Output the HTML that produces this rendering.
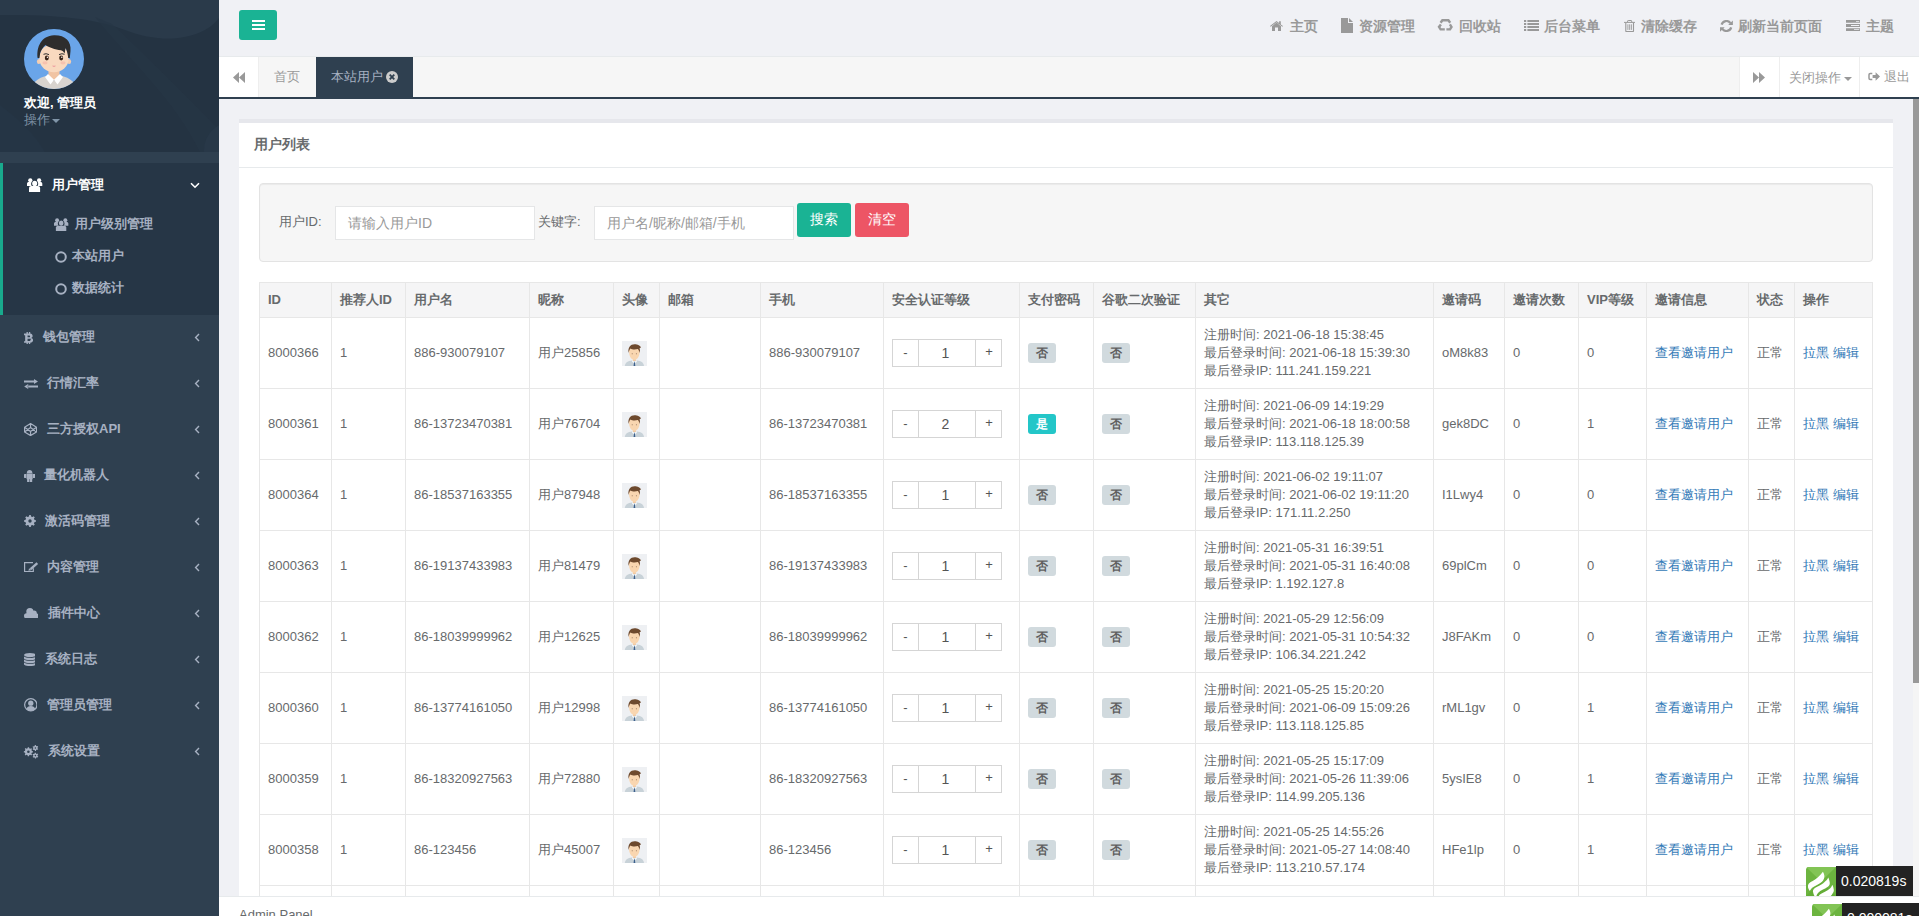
<!DOCTYPE html>
<html><head><meta charset="utf-8">
<style>
*{box-sizing:border-box}
html,body{margin:0;padding:0}
body{width:1919px;height:916px;overflow:hidden;position:relative;background:#f0f1f5;font-family:"Liberation Sans",sans-serif;font-size:13px;color:#676a6c}
.abs{position:absolute}
/* sidebar */
#side{position:absolute;left:0;top:0;width:219px;height:916px;background:#2f4050;overflow:hidden}
#prof{position:absolute;left:0;top:0;width:219px;height:152px;background:#243342;overflow:hidden}
#act{position:absolute;left:0;top:163px;width:219px;height:152px;background:#263646;border-left:3px solid #19aa8d}
.mi{position:absolute;left:0;width:219px;height:46px;color:#a7b1c2;font-weight:bold;font-size:13px}
.mi .ic{position:absolute;top:16px;left:24px}
.mi .tx{position:absolute;top:14px;line-height:18px}
.mi .ar{position:absolute;left:193px;top:17px}
/* top */
#top{position:absolute;left:219px;top:0;width:1700px;height:57px;background:#f0f1f5;border-bottom:1px solid #e7eaec}
#tabs{position:absolute;left:219px;top:57px;width:1700px;height:42px;background:#f6f6f6;border-bottom:2px solid #2f4050}
#main{position:absolute;left:219px;top:99px;width:1700px;height:797px;background:#f0f1f5;overflow:hidden}
#foot{position:absolute;left:219px;top:896px;width:1700px;height:20px;background:#fff;border-top:1px solid #e7eaec}
.nav-r{position:absolute;top:17px;font-size:14px;font-weight:bold;color:#999;line-height:18px;white-space:nowrap}
table.t{position:absolute;left:40px;top:183px;border-collapse:collapse;table-layout:fixed;font-size:13px;color:#676a6c}
table.t td,table.t th{border:1px solid #e7e7e7;padding:8px;line-height:18px;vertical-align:middle;text-align:left;white-space:nowrap;overflow:hidden}
table.t th{background:#f5f5f6;font-weight:bold}
a{color:#337ab7;text-decoration:none}
.lbl{display:inline-block;width:28px;height:20px;border-radius:3px;background:#d1dade;color:#5e5e5e;font-size:12px;font-weight:bold;text-align:center;line-height:20px}
.lbl.info{background:#23c6c8;color:#fff}
.stp{position:relative;width:110px;height:28px;border:1px solid #d5d5d5;color:#555}

.inp{background:#fff;border:1px solid #e5e6e7;color:#999;padding-left:12px;line-height:32px;font-size:14px;white-space:nowrap}
.btn{color:#fff;border-radius:3px;text-align:center;line-height:32px;font-size:14px;font-weight:500}
.stp .s1,.stp .s2,.stp .s3{position:absolute;top:0;height:26px;line-height:26px;text-align:center}
.stp .s1{left:0;width:26px;border-right:1px solid #d5d5d5}
.stp .s2{left:26px;width:56px;font-size:14px;padding-right:3px}
.stp .s3{left:82px;width:26px;border-left:1px solid #d5d5d5;line-height:24px;padding-left:1px}
</style></head>
<body>
<div id="side">
  <div id="prof">
    <svg class="abs" style="left:0;top:0" width="219" height="152" viewBox="0 0 219 152">
      <path d="M0 0H219V18C205 38 165 46 125 30C100 20 60 14 0 15Z" fill="#2a3a4a"/>
      <path d="M95 17 C 130 60, 175 100, 200 152 L 219 152 L 219 130 C 190 100, 150 60, 112 24Z" fill="#263646" opacity=".7"/>
      <circle cx="232" cy="150" r="28" fill="#283848"/>
      <path d="M0 105 C 20 120, 35 135, 45 152 L0 152Z" fill="#253545"/>
    </svg>
    <svg class="abs" style="left:24px;top:29px" width="60" height="60" viewBox="0 0 60 60">
      <circle cx="30" cy="30" r="30" fill="#6aa5e9"/>
      <path d="M24.5 40 h11 v7 L30 52 L24.5 47z" fill="#f1c4a3"/>
      <path d="M10.74 53 C 14 49.5, 19 47.5, 24 46.5 L30 52 L36 46.5 C 41 47.5, 46 49.5, 49.26 53 A30 30 0 0 1 10.74 53 Z" fill="#d9d4cf"/>
      <path d="M24 45 L30 50.8 L26.5 55.5 L21 48Z M36 45 L30 50.8 L33.5 55.5 L39 48Z" fill="#fff"/>
      <ellipse cx="14.8" cy="32.5" rx="1.9" ry="2.6" fill="#f4cdb0"/>
      <ellipse cx="45.2" cy="32.5" rx="1.9" ry="2.6" fill="#f4cdb0"/>
      <ellipse cx="30" cy="29.5" rx="14.7" ry="13.8" fill="#f9d9bf"/><path d="M16 30 C 15.5 22, 18 16, 30 15 C 42 16, 44.5 22, 44 30Z" fill="#f9d9bf"/>
      <path d="M13.6 29 C 12.5 18, 17 7, 30 6.3 C 41 6, 47.5 12, 46.5 22 L 45.8 29 L 44.2 29 C 43.8 24.5, 42.8 21.5, 41.6 19 L 40.6 24.5 C 39.5 22.5, 38.5 21.6, 37 21.2 C 31 20.5, 25 18.5, 21.5 16 C 19 18, 17.2 21, 16.2 24 L 15.4 29 Z" fill="#2e2d2d"/>
      <ellipse cx="22.8" cy="29" rx="2" ry="2.4" fill="#3a2418"/>
      <ellipse cx="37.2" cy="29" rx="2" ry="2.4" fill="#3a2418"/>
      <circle cx="23.4" cy="28.3" r=".7" fill="#fff"/><circle cx="37.8" cy="28.3" r=".7" fill="#fff"/>
      <path d="M19.5 25.3 Q22 24 25 25.6" stroke="#2e2d2d" stroke-width="1" fill="none"/>
      <path d="M35 25.6 Q38 24 40.5 25.3" stroke="#2e2d2d" stroke-width="1" fill="none"/>
      <ellipse cx="21" cy="33.8" rx="2.6" ry="1.6" fill="#f5b8a8" opacity=".7"/>
      <ellipse cx="39" cy="33.8" rx="2.6" ry="1.6" fill="#f5b8a8" opacity=".7"/>
      <path d="M28 36.8 Q30 38.8 32 36.8Z" fill="#e98a94"/>
    </svg>
    <div class="abs" style="left:24px;top:94px;font-size:13px;font-weight:bold;color:#fff;line-height:18px;white-space:nowrap">欢迎, 管理员</div>
    <div class="abs" style="left:24px;top:111px;font-size:13px;color:#8095a8;line-height:18px;white-space:nowrap">操作<span style="display:inline-block;margin-left:2px;vertical-align:middle;width:0;height:0;border-left:4px solid transparent;border-right:4px solid transparent;border-top:4px solid #8095a8"></span></div>
  </div>
  <div id="act"></div>
  <!-- 用户管理 -->
  <svg class="abs" style="left:27.4px;top:178px" width="16" height="14" viewBox="0 0 16 14" fill="#fff">
    <circle cx="3.3" cy="2.3" r="2.1"/><circle cx="12.1" cy="2.3" r="2.1"/>
    <path d="M0 8.1V5.8C0 4.8.8 4.1 1.8 4.1H4.6C4.2 4.7 4.1 5.3 4.1 6c0 .8.3 1.5.7 2.1z"/>
    <path d="M15.3 8.1V5.8c0-1-.8-1.7-1.8-1.7h-2.8c.4.6.5 1.2.5 1.9 0 .8-.3 1.5-.7 2.1z"/>
    <ellipse cx="7.67" cy="5.4" rx="2.5" ry="2.7"/>
    <path d="M2 14V10.2C2 9 3 8.1 4.2 8.1H11C12.2 8.1 13.1 9 13.1 10.2V14z"/>
  </svg>
  <div class="abs" style="left:52px;top:176px;color:#fff;font-weight:bold;line-height:18px">用户管理</div>
  <svg class="abs" style="left:190px;top:182px" width="10" height="7" viewBox="0 0 10 7"><path d="M1 1.2 L5 5.2 L9 1.2" stroke="#fff" stroke-width="1.6" fill="none"/></svg>
  <!-- sub -->
  <svg class="abs" style="left:54.4px;top:217.8px" width="15" height="13.2" viewBox="0 0 16 14" fill="#a7b1c2">
    <circle cx="3.3" cy="2.3" r="2.1"/><circle cx="12.1" cy="2.3" r="2.1"/>
    <path d="M0 8.1V5.8C0 4.8.8 4.1 1.8 4.1H4.6C4.2 4.7 4.1 5.3 4.1 6c0 .8.3 1.5.7 2.1z"/>
    <path d="M15.3 8.1V5.8c0-1-.8-1.7-1.8-1.7h-2.8c.4.6.5 1.2.5 1.9 0 .8-.3 1.5-.7 2.1z"/>
    <ellipse cx="7.67" cy="5.4" rx="2.5" ry="2.7"/>
    <path d="M2 14V10.2C2 9 3 8.1 4.2 8.1H11C12.2 8.1 13.1 9 13.1 10.2V14z"/>
  </svg>
  <div class="abs" style="left:75px;top:215px;color:#a7b1c2;font-weight:bold;line-height:18px">用户级别管理</div>
  <svg class="abs" style="left:55px;top:251px" width="12" height="12" viewBox="0 0 12 12"><circle cx="6" cy="6" r="4.8" stroke="#a7b1c2" stroke-width="2" fill="none"/></svg>
  <div class="abs" style="left:72px;top:247px;color:#a7b1c2;font-weight:bold;line-height:18px">本站用户</div>
  <svg class="abs" style="left:55px;top:283px" width="12" height="12" viewBox="0 0 12 12"><circle cx="6" cy="6" r="4.8" stroke="#a7b1c2" stroke-width="2" fill="none"/></svg>
  <div class="abs" style="left:72px;top:279px;color:#a7b1c2;font-weight:bold;line-height:18px">数据统计</div>
  <svg class="abs" style="left:23.9px;top:331.5px" width="9.6" height="12.4" viewBox="0 0 10 13" fill="#a7b1c2"><path d="M2.6 0h1.4v1.6h1.1V0h1.4v1.7C8 2 9 2.9 9 4.2c0 1-.6 1.7-1.4 2 1.2.3 1.9 1.1 1.9 2.3 0 1.7-1.3 2.7-3 2.9V13H5.1v-1.6H4V13H2.6v-1.6H0V9.6h1.2V3.4H0V1.6h2.6zM3.7 3.6v2h1.7c.6 0 1-.35 1-1S6 3.6 5.4 3.6zm0 3.6v2.2h1.9c.7 0 1.15-.4 1.15-1.1S8 7.2 7.3 7.2z"/></svg>
<div class="abs" style="left:43px;top:328px;color:#a7b1c2;font-weight:bold;line-height:18px;white-space:nowrap">钱包管理</div>
<svg class="abs" style="left:194px;top:333px" width="6" height="9" viewBox="0 0 6 9"><path d="M5 1 1.6 4.5 5 8" stroke="#a7b1c2" stroke-width="1.4" fill="none"/></svg>
<svg class="abs" style="left:23.7px;top:378.8px" width="14.2" height="10" viewBox="0 0 14.2 10" fill="#a7b1c2"><path d="M0 1.6H10.5V3.6H0z M10 0 14 2.6 10 5.1z M3.7 6.4H14.2V8.4H3.7z M4.2 4.9 0.2 7.4 4.2 10z"/></svg>
<div class="abs" style="left:47px;top:374px;color:#a7b1c2;font-weight:bold;line-height:18px;white-space:nowrap">行情汇率</div>
<svg class="abs" style="left:194px;top:379px" width="6" height="9" viewBox="0 0 6 9"><path d="M5 1 1.6 4.5 5 8" stroke="#a7b1c2" stroke-width="1.4" fill="none"/></svg>
<svg class="abs" style="left:23.9px;top:422.6px" width="13.1" height="13.2" viewBox="0 0 13.1 13.2" fill="none" stroke="#a7b1c2" stroke-width="1.2" stroke-linejoin="round"><path d="M6.55 0.6 12.5 4.3V8.9L6.55 12.6 0.6 8.9V4.3z M0.6 4.3 6.55 8.6 12.5 4.3 M0.6 8.9 6.55 4.6 12.5 8.9 M6.55 0.6V4.6 M6.55 8.6V12.6"/></svg>
<div class="abs" style="left:47px;top:420px;color:#a7b1c2;font-weight:bold;line-height:18px;white-space:nowrap">三方授权API</div>
<svg class="abs" style="left:194px;top:425px" width="6" height="9" viewBox="0 0 6 9"><path d="M5 1 1.6 4.5 5 8" stroke="#a7b1c2" stroke-width="1.4" fill="none"/></svg>
<svg class="abs" style="left:23.5px;top:469.9px" width="11.3" height="12" viewBox="0 0 11.3 12" fill="#a7b1c2"><path d="M2.8 3.2C2.8 1.4 4 0.1 5.6 0.1S8.4 1.4 8.4 3.2z"/><path d="M2.6 3.5H8.7V9.2H2.6z"/><path d="M0 4.6Q0 4 .6 4H2.4V7.9H.6Q0 7.9 0 7.3z"/><path d="M11.3 4.6Q11.3 4 10.7 4H8.9V7.9H10.7Q11.3 7.9 11.3 7.3z"/><path d="M3.1 9H5.4V12H3.1z M5.9 9H8.2V12H5.9z"/></svg>
<div class="abs" style="left:44px;top:466px;color:#a7b1c2;font-weight:bold;line-height:18px;white-space:nowrap">量化机器人</div>
<svg class="abs" style="left:194px;top:471px" width="6" height="9" viewBox="0 0 6 9"><path d="M5 1 1.6 4.5 5 8" stroke="#a7b1c2" stroke-width="1.4" fill="none"/></svg>
<svg class="abs" style="left:23.9px;top:515.4px" width="12" height="12" viewBox="0 0 12 12" fill="#a7b1c2" fill-rule="evenodd"><path d="M4.99 1.41 L5.18 0.06 L6.82 0.06 L7.01 1.41 L8.53 2.04 L9.62 1.22 L10.78 2.38 L9.96 3.47 L10.59 4.99 L11.94 5.18 L11.94 6.82 L10.59 7.01 L9.96 8.53 L10.78 9.62 L9.62 10.78 L8.53 9.96 L7.01 10.59 L6.82 11.94 L5.18 11.94 L4.99 10.59 L3.47 9.96 L2.38 10.78 L1.22 9.62 L2.04 8.53 L1.41 7.01 L0.06 6.82 L0.06 5.18 L1.41 4.99 L2.04 3.47 L1.22 2.38 L2.38 1.22 L3.47 2.04Z M7.70 6.00 A1.7 1.7 0 1 0 4.30 6.00 A1.7 1.7 0 1 0 7.70 6.00Z"/></svg>
<div class="abs" style="left:45px;top:512px;color:#a7b1c2;font-weight:bold;line-height:18px;white-space:nowrap">激活码管理</div>
<svg class="abs" style="left:194px;top:517px" width="6" height="9" viewBox="0 0 6 9"><path d="M5 1 1.6 4.5 5 8" stroke="#a7b1c2" stroke-width="1.4" fill="none"/></svg>
<svg class="abs" style="left:24px;top:561.8px" width="15" height="11" viewBox="0 0 15 11" fill="none" stroke="#a7b1c2"><path d="M9 0.6H0.6V9.5H9.3V6.2" stroke-width="1.2"/><path d="M13.3 1.2 6.6 7.2" stroke-width="2.4"/><path d="M4.6 8.6 5.3 6.5 7.2 8.1Z" fill="#a7b1c2" stroke-width=".3"/></svg>
<div class="abs" style="left:47px;top:558px;color:#a7b1c2;font-weight:bold;line-height:18px;white-space:nowrap">内容管理</div>
<svg class="abs" style="left:194px;top:563px" width="6" height="9" viewBox="0 0 6 9"><path d="M5 1 1.6 4.5 5 8" stroke="#a7b1c2" stroke-width="1.4" fill="none"/></svg>
<svg class="abs" style="left:23.9px;top:607.6px" width="14.5" height="10.6" viewBox="0 0 14.5 10.6" fill="#a7b1c2"><circle cx="2.6" cy="7.9" r="2.6"/><circle cx="5.9" cy="3.7" r="3.6"/><circle cx="10.1" cy="5.2" r="2.7"/><circle cx="11.9" cy="7.9" r="2.6"/><path d="M2.6 5.3H11.9V10.5H2.6z"/></svg>
<div class="abs" style="left:48px;top:604px;color:#a7b1c2;font-weight:bold;line-height:18px;white-space:nowrap">插件中心</div>
<svg class="abs" style="left:194px;top:609px" width="6" height="9" viewBox="0 0 6 9"><path d="M5 1 1.6 4.5 5 8" stroke="#a7b1c2" stroke-width="1.4" fill="none"/></svg>
<svg class="abs" style="left:23.7px;top:652.5px" width="11.8" height="13.4" viewBox="0 0 11.8 13.4" fill="#a7b1c2"><ellipse cx="5.9" cy="2.1" rx="5.9" ry="2.1"/><path d="M0 3.6C.8 4.5 3 5.0 5.9 5.0S11 4.5 11.8 3.6V5.6C11 6.6 8.8 7.2 5.9 7.2S.8 6.6 0 5.6Z M0 6.6C.8 7.5 3 8.0 5.9 8.0S11 7.5 11.8 6.6V8.6C11 9.6 8.8 10.2 5.9 10.2S.8 9.6 0 8.6Z M0 9.6C.8 10.5 3 11.0 5.9 11.0S11 10.5 11.8 9.6V11.5C11 12.5 8.8 13.1 5.9 13.1S.8 12.5 0 11.5Z"/></svg>
<div class="abs" style="left:45px;top:650px;color:#a7b1c2;font-weight:bold;line-height:18px;white-space:nowrap">系统日志</div>
<svg class="abs" style="left:194px;top:655px" width="6" height="9" viewBox="0 0 6 9"><path d="M5 1 1.6 4.5 5 8" stroke="#a7b1c2" stroke-width="1.4" fill="none"/></svg>
<svg class="abs" style="left:23.9px;top:698.4px" width="13.6" height="13.6" viewBox="0 0 13 13"><circle cx="6.5" cy="6.5" r="5.9" stroke="#a7b1c2" stroke-width="1.2" fill="none"/><circle cx="6.5" cy="5" r="2.5" fill="#a7b1c2"/><path d="M2.2 10.6C2.8 8.8 4.4 7.7 6.5 7.7s3.7 1.1 4.3 2.9C9.7 11.8 8.2 12.4 6.5 12.4S3.3 11.8 2.2 10.6z" fill="#a7b1c2"/></svg>
<div class="abs" style="left:47px;top:696px;color:#a7b1c2;font-weight:bold;line-height:18px;white-space:nowrap">管理员管理</div>
<svg class="abs" style="left:194px;top:701px" width="6" height="9" viewBox="0 0 6 9"><path d="M5 1 1.6 4.5 5 8" stroke="#a7b1c2" stroke-width="1.4" fill="none"/></svg>
<svg class="abs" style="left:23px;top:744.5px" width="16" height="14" viewBox="0 0 16 14" fill="#a7b1c2" fill-rule="evenodd"><path d="M4.64 3.28 L4.79 2.24 L6.05 2.25 L6.19 3.29 L7.35 3.78 L8.19 3.14 L9.08 4.04 L8.44 4.87 L8.92 6.04 L9.96 6.19 L9.95 7.45 L8.91 7.59 L8.42 8.75 L9.06 9.59 L8.16 10.48 L7.33 9.84 L6.16 10.32 L6.01 11.36 L4.75 11.35 L4.61 10.31 L3.45 9.82 L2.61 10.46 L1.72 9.56 L2.36 8.73 L1.88 7.56 L0.84 7.41 L0.85 6.15 L1.89 6.01 L2.38 4.85 L1.74 4.01 L2.64 3.12 L3.47 3.76Z M6.70 6.80 A1.3 1.3 0 1 0 4.10 6.80 A1.3 1.3 0 1 0 6.70 6.80Z M14.56 3.44 L15.26 3.90 L14.75 4.87 L13.97 4.54 L13.10 5.09 L13.05 5.93 L11.96 5.97 L11.85 5.13 L10.94 4.65 L10.19 5.03 L9.61 4.10 L10.28 3.59 L10.24 2.56 L9.54 2.10 L10.05 1.13 L10.83 1.46 L11.70 0.91 L11.75 0.07 L12.84 0.03 L12.95 0.87 L13.86 1.35 L14.61 0.97 L15.19 1.90 L14.52 2.41Z M13.20 3.00 A0.8 0.8 0 1 0 11.60 3.00 A0.8 0.8 0 1 0 13.20 3.00Z M14.56 11.04 L15.26 11.50 L14.75 12.47 L13.97 12.14 L13.10 12.69 L13.05 13.53 L11.96 13.57 L11.85 12.73 L10.94 12.25 L10.19 12.63 L9.61 11.70 L10.28 11.19 L10.24 10.16 L9.54 9.70 L10.05 8.73 L10.83 9.06 L11.70 8.51 L11.75 7.67 L12.84 7.63 L12.95 8.47 L13.86 8.95 L14.61 8.57 L15.19 9.50 L14.52 10.01Z M13.20 10.60 A0.8 0.8 0 1 0 11.60 10.60 A0.8 0.8 0 1 0 13.20 10.60Z"/></svg>
<div class="abs" style="left:48px;top:742px;color:#a7b1c2;font-weight:bold;line-height:18px;white-space:nowrap">系统设置</div>
<svg class="abs" style="left:194px;top:747px" width="6" height="9" viewBox="0 0 6 9"><path d="M5 1 1.6 4.5 5 8" stroke="#a7b1c2" stroke-width="1.4" fill="none"/></svg>

</div>
<div id="top">
  <div class="abs" style="left:20px;top:10px;width:38px;height:30px;background:#1ab394;border-radius:3px">
    <div class="abs" style="left:13px;top:10px;width:13px;height:2px;background:#fff"></div>
    <div class="abs" style="left:13px;top:14px;width:13px;height:2px;background:#fff"></div>
    <div class="abs" style="left:13px;top:18px;width:13px;height:2px;background:#fff"></div>
  </div>
</div>
<!-- top right menu -->
<svg class="abs" style="left:1270px;top:21px" width="13" height="10" viewBox="0 0 13 10" fill="#999"><path d="M6.5 1.6 11 5.3V10H8V6.6H5V10H2V5.3z"/><path d="M0 5.1 6.5 0l2.6 2V.3h1.7v3.2L13 5.1l-.7.7-5.8-4.5L.7 5.8z"/></svg>
<div class="nav-r" style="left:1290px">主页</div>
<svg class="abs" style="left:1341px;top:18px" width="12" height="15" viewBox="0 0 12 15" fill="#999"><path d="M0 0h7v5h5v10H0z M8 0l4 4H8z"/></svg>
<div class="nav-r" style="left:1359px">资源管理</div>
<svg class="abs" style="left:1436px;top:17px" width="18" height="16" viewBox="0 0 18 16" fill="none" stroke="#999" stroke-width="2.4" stroke-linejoin="miter"><path d="M4.6 5.8 6.4 3.2H12.4L14.2 5.8"/><path d="M13.9 7.4 15.5 9.9 14 12.4H10.4"/><path d="M4.9 7.4 3 9.9 4.6 12.4H8.8"/></svg>
<div class="nav-r" style="left:1459px">回收站</div>
<svg class="abs" style="left:1523.8px;top:19.9px" width="15.2" height="11" viewBox="0 0 15.2 11" fill="#999"><path d="M0 0.00h2.2v1.9H0z M3.4 0.00h11.8v1.9H3.4z M0 3.03h2.2v1.9H0z M3.4 3.03h11.8v1.9H3.4z M0 6.06h2.2v1.9H0z M3.4 6.06h11.8v1.9H3.4z M0 9.09h2.2v1.9H0z M3.4 9.09h11.8v1.9H3.4z "/></svg>
<div class="nav-r" style="left:1544px">后台菜单</div>
<svg class="abs" style="left:1623.5px;top:20px" width="11.3" height="12" viewBox="0 0 11.3 12" fill="none" stroke="#999"><path d="M3.6 2.2V1.1Q3.6 .5 4.2 .5H7.1Q7.7 .5 7.7 1.1V2.2" stroke-width="1"/><path d="M0 2.4H11.3" stroke-width="1"/><path d="M1.8 2.8V11Q1.8 11.5 2.3 11.5H9Q9.5 11.5 9.5 11V2.8" stroke-width="1.1"/><path d="M3.9 4.3V9.9 M5.65 4.3V9.9 M7.4 4.3V9.9" stroke-width=".9"/></svg>
<div class="nav-r" style="left:1641px">清除缓存</div>
<svg class="abs" style="left:1720px;top:20px" width="13" height="12" viewBox="0 0 13 12" fill="#999"><path d="M1.6 4.6A4.9 4.9 0 0 1 10.4 3.2" stroke="#999" stroke-width="2.2" fill="none"/><path d="M12.9 0.4V4.9H8.2z"/><path d="M11.2 7.4A4.9 4.9 0 0 1 2.4 8.8" stroke="#999" stroke-width="2.2" fill="none"/><path d="M0 11.8V7.2H4.7z"/></svg>
<div class="nav-r" style="left:1738px">刷新当前页面</div>
<svg class="abs" style="left:1846px;top:20px" width="14" height="11" viewBox="0 0 14 11"><path d="M0 0h14v2.8H0z M0 4.1h14v2.8H0z M0 8.2h14v2.8H0z" fill="#999"/><path d="M10 1h3.2v.8H10z M5 5.1h8.2v.8H5z M8 9.2h5.2v.8H8z" fill="#f0f1f5"/></svg>
<div class="nav-r" style="left:1866px">主题</div>
<div id="tabs">
  <div class="abs" style="left:0;top:0;width:40px;height:40px;background:#fff;border-right:1px solid #eee"></div>
  <svg class="abs" style="left:14px;top:15px" width="12" height="11" viewBox="0 0 12 11" fill="#999"><path d="M0 5.5 6 0v11z M6 5.5l6-5.5v11z"/></svg>
  <div class="abs" style="left:40px;top:0;width:57px;height:40px;line-height:39px;color:#999;padding-left:15px">首页</div>
  <div class="abs" style="left:97px;top:0;width:97px;height:40px;background:#2f4050;color:#a7b1c2;line-height:40px;padding-left:15px;white-space:nowrap">本站用户</div>
  <svg class="abs" style="left:167px;top:14px" width="12" height="12" viewBox="0 0 12 12"><circle cx="6" cy="6" r="6" fill="#ccc"/><path d="M3.7 3.7 8.3 8.3 M8.3 3.7 3.7 8.3" stroke="#2f4050" stroke-width="1.8"/></svg>
  <div class="abs" style="left:1521px;top:0;width:179px;height:40px;background:#fff"></div>
  <div class="abs" style="left:1520px;top:0;width:1px;height:40px;background:#eee"></div>
  <div class="abs" style="left:1560px;top:0;width:1px;height:40px;background:#eee"></div>
  <div class="abs" style="left:1640px;top:0;width:1px;height:40px;background:#eee"></div>
  <svg class="abs" style="left:1534px;top:15px" width="12" height="11" viewBox="0 0 12 11" fill="#999"><path d="M12 5.5 6 0v11z M6 5.5 0 0v11z"/></svg>
  <div class="abs" style="left:1569.5px;top:0.5px;line-height:40px;color:#999;white-space:nowrap">关闭操作<span style="display:inline-block;margin-left:3px;vertical-align:middle;position:relative;top:1px;width:0;height:0;border-left:4px solid transparent;border-right:4px solid transparent;border-top:4px solid #999"></span></div>
  <svg class="abs" style="left:1649.3px;top:14.9px" width="12" height="9" viewBox="0 0 12 9"><path d="M4.3 1.6H2.2Q1 1.6 1 2.8V6.2Q1 7.4 2.2 7.4H4.3" stroke="#999" stroke-width="1.5" fill="none"/><path d="M4.6 3.1H7.6V0.2L12 4.5 7.6 8.8V5.9H4.6Z" fill="#999"/></svg>
  <div class="abs" style="left:1665px;top:0;line-height:40px;color:#999;white-space:nowrap">退出</div>
</div>
<div id="main">
  <div class="abs" style="left:20px;top:20px;width:1654px;height:800px;background:#fff;border-top:4px solid #e6e7ec">
    <div class="abs" style="left:15px;top:12px;font-size:14px;font-weight:bold;line-height:18px;color:#676a6c">用户列表</div>
    <div class="abs" style="left:0;top:44px;width:1654px;height:1px;background:#e7eaec"></div>
    <div class="abs well" style="left:20px;top:60px;width:1614px;height:79px;background:#f6f6f6;border:1px solid #e3e3e3;border-radius:4px;box-shadow:inset 0 1px 1px rgba(0,0,0,.05)">
      <div class="abs" style="left:19px;top:29px;line-height:18px;color:#676a6c">用户ID:</div>
      <div class="abs inp" style="left:75px;top:22px;width:200px;height:34px">请输入用户ID</div>
      <div class="abs" style="left:278px;top:29px;line-height:18px;color:#676a6c">关键字:</div>
      <div class="abs inp" style="left:334px;top:22px;width:200px;height:34px">用户名/昵称/邮箱/手机</div>
      <div class="abs btn" style="left:537px;top:19px;width:54px;height:34px;background:#1ab394">搜索</div>
      <div class="abs btn" style="left:595px;top:19px;width:54px;height:34px;background:#ed5565">清空</div>
    </div>
  </div>
  <table class="t"><colgroup><col style="width:72px"><col style="width:74px"><col style="width:124px"><col style="width:84px"><col style="width:46px"><col style="width:101px"><col style="width:123px"><col style="width:136px"><col style="width:74px"><col style="width:102px"><col style="width:238px"><col style="width:71px"><col style="width:74px"><col style="width:68px"><col style="width:102px"><col style="width:46px"><col style="width:78px"></colgroup><thead><tr><th>ID</th><th>推荐人ID</th><th>用户名</th><th>昵称</th><th>头像</th><th>邮箱</th><th>手机</th><th>安全认证等级</th><th>支付密码</th><th>谷歌二次验证</th><th>其它</th><th>邀请码</th><th>邀请次数</th><th>VIP等级</th><th>邀请信息</th><th>状态</th><th>操作</th></tr></thead><tbody>
<tr><td>8000366</td><td>1</td><td>886-930079107</td><td>用户25856</td><td><svg width="25" height="25" viewBox="0 0 25 25" style="display:block"><rect width="25" height="25" fill="#eef0f3"/><path d="M2.8 25C3.2 21.5 6 20.2 10 19.6H15C19 20.2 21.6 21.5 22 25Z" fill="#c8d2d8"/><path d="M11 16h2.8v4H11z" fill="#f3c9a0"/><path d="M10 19.3 12.4 21 14.8 19.3 14.6 20.9 12.4 22.2 10.3 20.9Z" fill="#fff"/><path d="M12 21.2H12.9L13.3 25H11.6Z" fill="#3b5f8c"/><path d="M7 9.5C7 7 9.5 6 12.3 6 15 6 17.6 7 17.7 9.5 17.9 15.5 15.2 18.8 12.3 18.8 9.5 18.8 6.8 15.5 7 9.5Z" fill="#f9d6b0"/><path d="M6.5 12C5.8 6.5 8.5 3.2 12.5 3.2 15.5 3.2 18.8 4.5 18.8 6.5 18.5 7 18 7.2 17.6 7 18 8.5 18 10 17.8 12 17.2 10 16.5 8.6 15.8 8 13 8.8 10 8.5 8.5 7.5 7.5 8.5 7 10 6.5 12Z" fill="#6e4a2e"/><circle cx="10.2" cy="12.8" r=".5" fill="#8a6a55"/><circle cx="14.4" cy="12.8" r=".5" fill="#8a6a55"/></svg></td><td></td><td>886-930079107</td>
<td><div class="stp"><div class="s1">-</div><div class="s2">1</div><div class="s3">+</div></div></td>
<td><span class="lbl">否</span></td><td><span class="lbl">否</span></td>
<td>注册时间: 2021-06-18 15:38:45<br>最后登录时间: 2021-06-18 15:39:30<br>最后登录IP: 111.241.159.221</td>
<td>oM8k83</td><td>0</td><td>0</td><td><a>查看邀请用户</a></td><td>正常</td><td><a>拉黑</a> <a>编辑</a></td></tr>
<tr><td>8000361</td><td>1</td><td>86-13723470381</td><td>用户76704</td><td><svg width="25" height="25" viewBox="0 0 25 25" style="display:block"><rect width="25" height="25" fill="#eef0f3"/><path d="M2.8 25C3.2 21.5 6 20.2 10 19.6H15C19 20.2 21.6 21.5 22 25Z" fill="#c8d2d8"/><path d="M11 16h2.8v4H11z" fill="#f3c9a0"/><path d="M10 19.3 12.4 21 14.8 19.3 14.6 20.9 12.4 22.2 10.3 20.9Z" fill="#fff"/><path d="M12 21.2H12.9L13.3 25H11.6Z" fill="#3b5f8c"/><path d="M7 9.5C7 7 9.5 6 12.3 6 15 6 17.6 7 17.7 9.5 17.9 15.5 15.2 18.8 12.3 18.8 9.5 18.8 6.8 15.5 7 9.5Z" fill="#f9d6b0"/><path d="M6.5 12C5.8 6.5 8.5 3.2 12.5 3.2 15.5 3.2 18.8 4.5 18.8 6.5 18.5 7 18 7.2 17.6 7 18 8.5 18 10 17.8 12 17.2 10 16.5 8.6 15.8 8 13 8.8 10 8.5 8.5 7.5 7.5 8.5 7 10 6.5 12Z" fill="#6e4a2e"/><circle cx="10.2" cy="12.8" r=".5" fill="#8a6a55"/><circle cx="14.4" cy="12.8" r=".5" fill="#8a6a55"/></svg></td><td></td><td>86-13723470381</td>
<td><div class="stp"><div class="s1">-</div><div class="s2">2</div><div class="s3">+</div></div></td>
<td><span class="lbl info">是</span></td><td><span class="lbl">否</span></td>
<td>注册时间: 2021-06-09 14:19:29<br>最后登录时间: 2021-06-18 18:00:58<br>最后登录IP: 113.118.125.39</td>
<td>gek8DC</td><td>0</td><td>1</td><td><a>查看邀请用户</a></td><td>正常</td><td><a>拉黑</a> <a>编辑</a></td></tr>
<tr><td>8000364</td><td>1</td><td>86-18537163355</td><td>用户87948</td><td><svg width="25" height="25" viewBox="0 0 25 25" style="display:block"><rect width="25" height="25" fill="#eef0f3"/><path d="M2.8 25C3.2 21.5 6 20.2 10 19.6H15C19 20.2 21.6 21.5 22 25Z" fill="#c8d2d8"/><path d="M11 16h2.8v4H11z" fill="#f3c9a0"/><path d="M10 19.3 12.4 21 14.8 19.3 14.6 20.9 12.4 22.2 10.3 20.9Z" fill="#fff"/><path d="M12 21.2H12.9L13.3 25H11.6Z" fill="#3b5f8c"/><path d="M7 9.5C7 7 9.5 6 12.3 6 15 6 17.6 7 17.7 9.5 17.9 15.5 15.2 18.8 12.3 18.8 9.5 18.8 6.8 15.5 7 9.5Z" fill="#f9d6b0"/><path d="M6.5 12C5.8 6.5 8.5 3.2 12.5 3.2 15.5 3.2 18.8 4.5 18.8 6.5 18.5 7 18 7.2 17.6 7 18 8.5 18 10 17.8 12 17.2 10 16.5 8.6 15.8 8 13 8.8 10 8.5 8.5 7.5 7.5 8.5 7 10 6.5 12Z" fill="#6e4a2e"/><circle cx="10.2" cy="12.8" r=".5" fill="#8a6a55"/><circle cx="14.4" cy="12.8" r=".5" fill="#8a6a55"/></svg></td><td></td><td>86-18537163355</td>
<td><div class="stp"><div class="s1">-</div><div class="s2">1</div><div class="s3">+</div></div></td>
<td><span class="lbl">否</span></td><td><span class="lbl">否</span></td>
<td>注册时间: 2021-06-02 19:11:07<br>最后登录时间: 2021-06-02 19:11:20<br>最后登录IP: 171.11.2.250</td>
<td>I1Lwy4</td><td>0</td><td>0</td><td><a>查看邀请用户</a></td><td>正常</td><td><a>拉黑</a> <a>编辑</a></td></tr>
<tr><td>8000363</td><td>1</td><td>86-19137433983</td><td>用户81479</td><td><svg width="25" height="25" viewBox="0 0 25 25" style="display:block"><rect width="25" height="25" fill="#eef0f3"/><path d="M2.8 25C3.2 21.5 6 20.2 10 19.6H15C19 20.2 21.6 21.5 22 25Z" fill="#c8d2d8"/><path d="M11 16h2.8v4H11z" fill="#f3c9a0"/><path d="M10 19.3 12.4 21 14.8 19.3 14.6 20.9 12.4 22.2 10.3 20.9Z" fill="#fff"/><path d="M12 21.2H12.9L13.3 25H11.6Z" fill="#3b5f8c"/><path d="M7 9.5C7 7 9.5 6 12.3 6 15 6 17.6 7 17.7 9.5 17.9 15.5 15.2 18.8 12.3 18.8 9.5 18.8 6.8 15.5 7 9.5Z" fill="#f9d6b0"/><path d="M6.5 12C5.8 6.5 8.5 3.2 12.5 3.2 15.5 3.2 18.8 4.5 18.8 6.5 18.5 7 18 7.2 17.6 7 18 8.5 18 10 17.8 12 17.2 10 16.5 8.6 15.8 8 13 8.8 10 8.5 8.5 7.5 7.5 8.5 7 10 6.5 12Z" fill="#6e4a2e"/><circle cx="10.2" cy="12.8" r=".5" fill="#8a6a55"/><circle cx="14.4" cy="12.8" r=".5" fill="#8a6a55"/></svg></td><td></td><td>86-19137433983</td>
<td><div class="stp"><div class="s1">-</div><div class="s2">1</div><div class="s3">+</div></div></td>
<td><span class="lbl">否</span></td><td><span class="lbl">否</span></td>
<td>注册时间: 2021-05-31 16:39:51<br>最后登录时间: 2021-05-31 16:40:08<br>最后登录IP: 1.192.127.8</td>
<td>69plCm</td><td>0</td><td>0</td><td><a>查看邀请用户</a></td><td>正常</td><td><a>拉黑</a> <a>编辑</a></td></tr>
<tr><td>8000362</td><td>1</td><td>86-18039999962</td><td>用户12625</td><td><svg width="25" height="25" viewBox="0 0 25 25" style="display:block"><rect width="25" height="25" fill="#eef0f3"/><path d="M2.8 25C3.2 21.5 6 20.2 10 19.6H15C19 20.2 21.6 21.5 22 25Z" fill="#c8d2d8"/><path d="M11 16h2.8v4H11z" fill="#f3c9a0"/><path d="M10 19.3 12.4 21 14.8 19.3 14.6 20.9 12.4 22.2 10.3 20.9Z" fill="#fff"/><path d="M12 21.2H12.9L13.3 25H11.6Z" fill="#3b5f8c"/><path d="M7 9.5C7 7 9.5 6 12.3 6 15 6 17.6 7 17.7 9.5 17.9 15.5 15.2 18.8 12.3 18.8 9.5 18.8 6.8 15.5 7 9.5Z" fill="#f9d6b0"/><path d="M6.5 12C5.8 6.5 8.5 3.2 12.5 3.2 15.5 3.2 18.8 4.5 18.8 6.5 18.5 7 18 7.2 17.6 7 18 8.5 18 10 17.8 12 17.2 10 16.5 8.6 15.8 8 13 8.8 10 8.5 8.5 7.5 7.5 8.5 7 10 6.5 12Z" fill="#6e4a2e"/><circle cx="10.2" cy="12.8" r=".5" fill="#8a6a55"/><circle cx="14.4" cy="12.8" r=".5" fill="#8a6a55"/></svg></td><td></td><td>86-18039999962</td>
<td><div class="stp"><div class="s1">-</div><div class="s2">1</div><div class="s3">+</div></div></td>
<td><span class="lbl">否</span></td><td><span class="lbl">否</span></td>
<td>注册时间: 2021-05-29 12:56:09<br>最后登录时间: 2021-05-31 10:54:32<br>最后登录IP: 106.34.221.242</td>
<td>J8FAKm</td><td>0</td><td>0</td><td><a>查看邀请用户</a></td><td>正常</td><td><a>拉黑</a> <a>编辑</a></td></tr>
<tr><td>8000360</td><td>1</td><td>86-13774161050</td><td>用户12998</td><td><svg width="25" height="25" viewBox="0 0 25 25" style="display:block"><rect width="25" height="25" fill="#eef0f3"/><path d="M2.8 25C3.2 21.5 6 20.2 10 19.6H15C19 20.2 21.6 21.5 22 25Z" fill="#c8d2d8"/><path d="M11 16h2.8v4H11z" fill="#f3c9a0"/><path d="M10 19.3 12.4 21 14.8 19.3 14.6 20.9 12.4 22.2 10.3 20.9Z" fill="#fff"/><path d="M12 21.2H12.9L13.3 25H11.6Z" fill="#3b5f8c"/><path d="M7 9.5C7 7 9.5 6 12.3 6 15 6 17.6 7 17.7 9.5 17.9 15.5 15.2 18.8 12.3 18.8 9.5 18.8 6.8 15.5 7 9.5Z" fill="#f9d6b0"/><path d="M6.5 12C5.8 6.5 8.5 3.2 12.5 3.2 15.5 3.2 18.8 4.5 18.8 6.5 18.5 7 18 7.2 17.6 7 18 8.5 18 10 17.8 12 17.2 10 16.5 8.6 15.8 8 13 8.8 10 8.5 8.5 7.5 7.5 8.5 7 10 6.5 12Z" fill="#6e4a2e"/><circle cx="10.2" cy="12.8" r=".5" fill="#8a6a55"/><circle cx="14.4" cy="12.8" r=".5" fill="#8a6a55"/></svg></td><td></td><td>86-13774161050</td>
<td><div class="stp"><div class="s1">-</div><div class="s2">1</div><div class="s3">+</div></div></td>
<td><span class="lbl">否</span></td><td><span class="lbl">否</span></td>
<td>注册时间: 2021-05-25 15:20:20<br>最后登录时间: 2021-06-09 15:09:26<br>最后登录IP: 113.118.125.85</td>
<td>rML1gv</td><td>0</td><td>1</td><td><a>查看邀请用户</a></td><td>正常</td><td><a>拉黑</a> <a>编辑</a></td></tr>
<tr><td>8000359</td><td>1</td><td>86-18320927563</td><td>用户72880</td><td><svg width="25" height="25" viewBox="0 0 25 25" style="display:block"><rect width="25" height="25" fill="#eef0f3"/><path d="M2.8 25C3.2 21.5 6 20.2 10 19.6H15C19 20.2 21.6 21.5 22 25Z" fill="#c8d2d8"/><path d="M11 16h2.8v4H11z" fill="#f3c9a0"/><path d="M10 19.3 12.4 21 14.8 19.3 14.6 20.9 12.4 22.2 10.3 20.9Z" fill="#fff"/><path d="M12 21.2H12.9L13.3 25H11.6Z" fill="#3b5f8c"/><path d="M7 9.5C7 7 9.5 6 12.3 6 15 6 17.6 7 17.7 9.5 17.9 15.5 15.2 18.8 12.3 18.8 9.5 18.8 6.8 15.5 7 9.5Z" fill="#f9d6b0"/><path d="M6.5 12C5.8 6.5 8.5 3.2 12.5 3.2 15.5 3.2 18.8 4.5 18.8 6.5 18.5 7 18 7.2 17.6 7 18 8.5 18 10 17.8 12 17.2 10 16.5 8.6 15.8 8 13 8.8 10 8.5 8.5 7.5 7.5 8.5 7 10 6.5 12Z" fill="#6e4a2e"/><circle cx="10.2" cy="12.8" r=".5" fill="#8a6a55"/><circle cx="14.4" cy="12.8" r=".5" fill="#8a6a55"/></svg></td><td></td><td>86-18320927563</td>
<td><div class="stp"><div class="s1">-</div><div class="s2">1</div><div class="s3">+</div></div></td>
<td><span class="lbl">否</span></td><td><span class="lbl">否</span></td>
<td>注册时间: 2021-05-25 15:17:09<br>最后登录时间: 2021-05-26 11:39:06<br>最后登录IP: 114.99.205.136</td>
<td>5ysIE8</td><td>0</td><td>1</td><td><a>查看邀请用户</a></td><td>正常</td><td><a>拉黑</a> <a>编辑</a></td></tr>
<tr><td>8000358</td><td>1</td><td>86-123456</td><td>用户45007</td><td><svg width="25" height="25" viewBox="0 0 25 25" style="display:block"><rect width="25" height="25" fill="#eef0f3"/><path d="M2.8 25C3.2 21.5 6 20.2 10 19.6H15C19 20.2 21.6 21.5 22 25Z" fill="#c8d2d8"/><path d="M11 16h2.8v4H11z" fill="#f3c9a0"/><path d="M10 19.3 12.4 21 14.8 19.3 14.6 20.9 12.4 22.2 10.3 20.9Z" fill="#fff"/><path d="M12 21.2H12.9L13.3 25H11.6Z" fill="#3b5f8c"/><path d="M7 9.5C7 7 9.5 6 12.3 6 15 6 17.6 7 17.7 9.5 17.9 15.5 15.2 18.8 12.3 18.8 9.5 18.8 6.8 15.5 7 9.5Z" fill="#f9d6b0"/><path d="M6.5 12C5.8 6.5 8.5 3.2 12.5 3.2 15.5 3.2 18.8 4.5 18.8 6.5 18.5 7 18 7.2 17.6 7 18 8.5 18 10 17.8 12 17.2 10 16.5 8.6 15.8 8 13 8.8 10 8.5 8.5 7.5 7.5 8.5 7 10 6.5 12Z" fill="#6e4a2e"/><circle cx="10.2" cy="12.8" r=".5" fill="#8a6a55"/><circle cx="14.4" cy="12.8" r=".5" fill="#8a6a55"/></svg></td><td></td><td>86-123456</td>
<td><div class="stp"><div class="s1">-</div><div class="s2">1</div><div class="s3">+</div></div></td>
<td><span class="lbl">否</span></td><td><span class="lbl">否</span></td>
<td>注册时间: 2021-05-25 14:55:26<br>最后登录时间: 2021-05-27 14:08:40<br>最后登录IP: 113.210.57.174</td>
<td>HFe1lp</td><td>0</td><td>1</td><td><a>查看邀请用户</a></td><td>正常</td><td><a>拉黑</a> <a>编辑</a></td></tr>
<tr><td>8000357</td><td>1</td><td>86-123456</td><td>用户45007</td><td><svg width="25" height="25" viewBox="0 0 25 25" style="display:block"><rect width="25" height="25" fill="#eef0f3"/><path d="M2.8 25C3.2 21.5 6 20.2 10 19.6H15C19 20.2 21.6 21.5 22 25Z" fill="#c8d2d8"/><path d="M11 16h2.8v4H11z" fill="#f3c9a0"/><path d="M10 19.3 12.4 21 14.8 19.3 14.6 20.9 12.4 22.2 10.3 20.9Z" fill="#fff"/><path d="M12 21.2H12.9L13.3 25H11.6Z" fill="#3b5f8c"/><path d="M7 9.5C7 7 9.5 6 12.3 6 15 6 17.6 7 17.7 9.5 17.9 15.5 15.2 18.8 12.3 18.8 9.5 18.8 6.8 15.5 7 9.5Z" fill="#f9d6b0"/><path d="M6.5 12C5.8 6.5 8.5 3.2 12.5 3.2 15.5 3.2 18.8 4.5 18.8 6.5 18.5 7 18 7.2 17.6 7 18 8.5 18 10 17.8 12 17.2 10 16.5 8.6 15.8 8 13 8.8 10 8.5 8.5 7.5 7.5 8.5 7 10 6.5 12Z" fill="#6e4a2e"/><circle cx="10.2" cy="12.8" r=".5" fill="#8a6a55"/><circle cx="14.4" cy="12.8" r=".5" fill="#8a6a55"/></svg></td><td></td><td>86-123456</td>
<td><div class="stp"><div class="s1">-</div><div class="s2">1</div><div class="s3">+</div></div></td>
<td><span class="lbl">否</span></td><td><span class="lbl">否</span></td>
<td>注册时间: 2021-05-25 14:55:26<br>最后登录时间: 2021-05-27 14:08:40<br>最后登录IP: 113.210.57.174</td>
<td>HFe1lp</td><td>0</td><td>1</td><td><a>查看邀请用户</a></td><td>正常</td><td><a>拉黑</a> <a>编辑</a></td></tr>
</tbody></table>
  <div class="abs" style="left:1694px;top:0;width:6px;height:797px;background:#f5f5f5"></div><div class="abs" style="left:1694px;top:0;width:6px;height:584px;background:#999"></div>
</div>
<div id="foot"><div class="abs" style="left:20px;top:9px;line-height:18px;color:#676a6c;font-size:13px">Admin Panel</div></div>
<div class="abs" style="left:1806px;top:867px;width:30px;height:29px;border-top-left-radius:3px;overflow:hidden"><svg width="30" height="29" viewBox="0 0 30 29" style="display:block"><rect width="30" height="29" fill="#6cb43f"/><path d="M0 0H30L15 14.5Z" fill="#82c455"/><path d="M0 29H30L15 14.5Z" fill="#64ad37"/><path fill="#fff" d="M16.8 4.7C15.5 7 11 11.5 7.9 13.3 5.5 14.7 3.5 15.5 2.5 17 1.5 18.5 1.7 21.5 3.8 24 4.5 22.5 5.5 21.3 7 20.3 9 19 12 17.6 14 16.3 16.5 14.7 18.3 12.5 18.4 9.5 18.4 7.5 17.8 6 16.8 4.7Z"/><path fill="#fff" d="M22.2 10.4C21.5 12 20.5 13.3 19.6 13.9 18 15.5 16.5 16.8 14.9 17.7 12.5 19 10.5 19.8 8.9 20.9 7.3 22 6.6 23.6 7 24.7 7.3 26.5 8 28 8.5 29H10.4C10.6 27.8 11.2 26.8 12 25.9 13.5 24.6 15 23.6 16.5 22.8 18.5 21.8 21 20.8 22.2 19.6 23.7 18.2 24 16.5 23.7 15.2 23.4 13.2 23 11.8 22.2 10.4Z"/><path fill="#fff" d="M26.3 17.7C25.6 19.5 25 20.7 24 21.5 22.5 22.8 20.8 23.8 19 24.7 17 25.7 15 26.8 13.6 27.8L12.7 29H24.7C25.5 28.3 26 27.6 26.3 26.9 27.5 25.5 28 24.2 27.8 22.8 27.6 20.8 27.1 19.2 26.3 17.7Z"/></svg></div>
<div class="abs" style="left:1836px;top:866px;width:77px;height:30px;background:#232323;color:#fff;font-size:14px;line-height:30px;padding-left:5px;white-space:nowrap">0.020819s</div>
<div class="abs" style="left:1812px;top:904px;width:30px;height:29px;border-top-left-radius:3px;overflow:hidden"><svg width="30" height="29" viewBox="0 0 30 29" style="display:block"><rect width="30" height="29" fill="#6cb43f"/><path d="M0 0H30L15 14.5Z" fill="#82c455"/><path d="M0 29H30L15 14.5Z" fill="#64ad37"/><path fill="#fff" d="M16.8 4.7C15.5 7 11 11.5 7.9 13.3 5.5 14.7 3.5 15.5 2.5 17 1.5 18.5 1.7 21.5 3.8 24 4.5 22.5 5.5 21.3 7 20.3 9 19 12 17.6 14 16.3 16.5 14.7 18.3 12.5 18.4 9.5 18.4 7.5 17.8 6 16.8 4.7Z"/><path fill="#fff" d="M22.2 10.4C21.5 12 20.5 13.3 19.6 13.9 18 15.5 16.5 16.8 14.9 17.7 12.5 19 10.5 19.8 8.9 20.9 7.3 22 6.6 23.6 7 24.7 7.3 26.5 8 28 8.5 29H10.4C10.6 27.8 11.2 26.8 12 25.9 13.5 24.6 15 23.6 16.5 22.8 18.5 21.8 21 20.8 22.2 19.6 23.7 18.2 24 16.5 23.7 15.2 23.4 13.2 23 11.8 22.2 10.4Z"/><path fill="#fff" d="M26.3 17.7C25.6 19.5 25 20.7 24 21.5 22.5 22.8 20.8 23.8 19 24.7 17 25.7 15 26.8 13.6 27.8L12.7 29H24.7C25.5 28.3 26 27.6 26.3 26.9 27.5 25.5 28 24.2 27.8 22.8 27.6 20.8 27.1 19.2 26.3 17.7Z"/></svg></div>
<div class="abs" style="left:1842px;top:903px;width:77px;height:30px;background:#232323;color:#fff;font-size:14px;line-height:30px;padding-left:5px;white-space:nowrap">0.000081s</div>
</body></html>
